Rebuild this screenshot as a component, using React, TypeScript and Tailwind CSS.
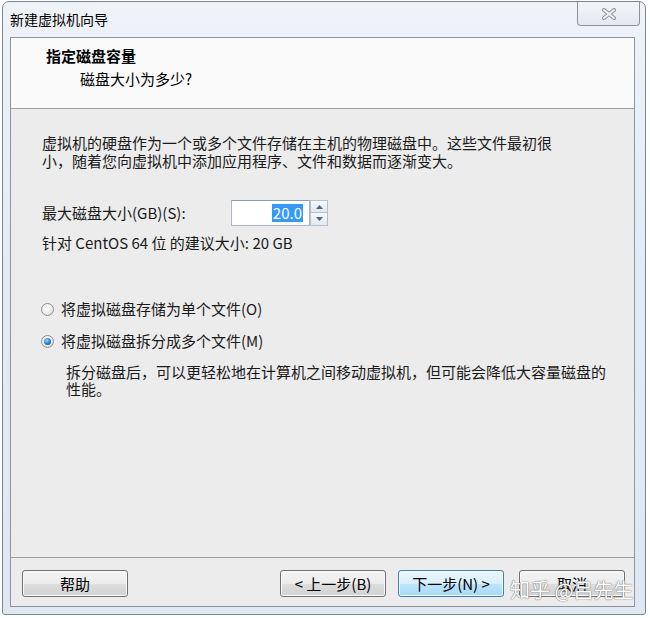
import React from 'react';

const F = "font-['Noto_Sans_CJK_SC','Microsoft_YaHei',sans-serif]";

function Radio({ checked }: { checked: boolean }) {
  return (
    <span className="w-[13px] h-[13px] rounded-full border border-[#8e8f8f] bg-[radial-gradient(circle_at_40%_35%,#ffffff_0%,#ececec_55%,#cdcdcd_100%)] flex items-center justify-center shrink-0">
      {checked && (
        <span className="w-[7px] h-[7px] rounded-full bg-[radial-gradient(circle_at_40%_35%,#9bd6fb_0%,#2a84cc_50%,#0b4f8a_100%)]" />
      )}
    </span>
  );
}

function WinButton({ children, def }: { children: React.ReactNode; def?: boolean }) {
  return (
    <div
      className={
        def
          ? 'w-[106px] h-[27px] rounded-[3px] border border-[#3c7fb1] bg-[linear-gradient(#eaf6fd_0%,#d9f0fc_50%,#bee6fd_50%,#a7d9f5_100%)] shadow-[inset_0_0_0_1px_#f4fbff] flex items-center justify-center text-[15px] leading-[18px] text-black'
          : 'w-[106px] h-[27px] rounded-[3px] border border-[#707070] bg-[linear-gradient(#f4f4f4_0%,#ececec_50%,#dedede_50%,#d2d2d2_100%)] shadow-[inset_0_0_0_1px_#fbfbfb] flex items-center justify-center text-[15px] leading-[18px] text-black'
      }
    >
      {children}
    </div>
  );
}

export default function App() {
  return (
    <div className={`relative w-[650px] h-[618px] bg-white overflow-hidden ${F}`}>
      <div className="pt-[1px] pl-[2px]">
        <div className="w-[644px] h-[614px] rounded-t-[7px] rounded-b-[3px] border border-[#7b8694] bg-[linear-gradient(180deg,#eef3f8_0%,#e3ebf4_40%,#dfe8f2_100%)] flex flex-col">
          {/* title bar */}
          <div className="h-[35px] flex items-start justify-between">
            <div className="pl-[7px] pt-[8px] text-[14px] leading-[18px] text-black">新建虚拟机向导</div>
            <div className="mr-[5px] w-[63px] h-[24px] rounded-b-[4px] border border-t-0 border-[#8a939e] bg-[linear-gradient(#f3f5f8_0%,#e4e9ef_100%)] flex items-center justify-center">
              <svg width="16" height="12" viewBox="0 0 16 12">
                <path d="M3 2 L13 10 M13 2 L3 10" stroke="#8d939a" strokeWidth="4" strokeLinecap="round" />
                <path d="M3 2 L13 10 M13 2 L3 10" stroke="#f4f5f6" strokeWidth="2" strokeLinecap="round" />
              </svg>
            </div>
          </div>
          {/* inner panel */}
          <div className="ml-[7px] mr-[10px] h-[570px] border border-[#8f959c] flex flex-col bg-[#ececec]">
            <div className="h-[71px] bg-[#fafafa] border-b border-[#a0a0a0] pl-[35px] pt-[8px]">
              <div className="text-[15px] leading-[20px] font-bold text-black">指定磁盘容量</div>
              <div className="mt-[3px] pl-[34px] text-[15px] leading-[20px] text-black">磁盘大小为多少?</div>
            </div>
            <div className="h-[448px] pl-[31px] pt-[25px] text-[15px] text-[#1a1a1a]">
              <div className="leading-[18px] whitespace-nowrap">
                <div>虚拟机的硬盘作为一个或多个文件存储在主机的物理磁盘中。这些文件最初很</div>
                <div>小，随着您向虚拟机中添加应用程序、文件和数据而逐渐变大。</div>
              </div>
              <div className="mt-[30px] flex items-center h-[26px]">
                <div className="w-[189px] leading-[18px]">最大磁盘大小(GB)(S):</div>
                <div className="w-[79px] h-[26px] border border-[#abb7c6] border-t-[#8e9cb0] bg-white flex items-center justify-end pr-[6px]">
                  <span className="bg-[#3399ff] text-white leading-[18px] px-[1px]">20.0</span>
                </div>
                <div className="w-[18px] h-[26px] flex flex-col">
                  <div className="h-[13px] border border-[#b4c0cf] bg-[linear-gradient(#f7f9fb,#e3e8ee)] flex items-center justify-center">
                    <svg width="7" height="4" viewBox="0 0 7 4"><path d="M0 4 L3.5 0 L7 4 Z" fill="#4d6185" /></svg>
                  </div>
                  <div className="h-[13px] border border-t-0 border-[#b4c0cf] bg-[linear-gradient(#f7f9fb,#e3e8ee)] flex items-center justify-center">
                    <svg width="7" height="4" viewBox="0 0 7 4"><path d="M0 0 L7 0 L3.5 4 Z" fill="#4d6185" /></svg>
                  </div>
                </div>
              </div>
              <div className="mt-[8px] leading-[18px]">针对 CentOS 64 位 的建议大小: 20 GB</div>
              <div className="mt-[47px] flex items-center gap-[7px] h-[20px] -ml-[1px]">
                <Radio checked={false} />
                <span className="leading-[20px]">将虚拟磁盘存储为单个文件(O)</span>
              </div>
              <div className="mt-[12px] flex items-center gap-[7px] h-[20px] -ml-[1px]">
                <Radio checked={true} />
                <span className="leading-[20px]">将虚拟磁盘拆分成多个文件(M)</span>
              </div>
              <div className="mt-[12px] pl-[24px] leading-[17px] whitespace-nowrap">
                <div>拆分磁盘后，可以更轻松地在计算机之间移动虚拟机，但可能会降低大容量磁盘的</div>
                <div>性能。</div>
              </div>
            </div>
            <div className="h-[1px] bg-[#a0a0a0]" />
            <div className="flex-1 flex items-start pt-[12px] pl-[11px] pr-[9px]">
              <WinButton>帮助</WinButton>
              <div className="flex-1" />
              <WinButton>&lt; 上一步(B)</WinButton>
              <div className="w-[12px]" />
              <WinButton def>下一步(N) &gt;</WinButton>
              <div className="w-[15px]" />
              <WinButton>取消</WinButton>
            </div>
          </div>
        </div>
      </div>
      {/* watermark */}
      <div className="absolute left-[510px] top-[577px] text-[20px] leading-[26px] text-white whitespace-nowrap [text-shadow:0_0_1px_#6b6b6b,0_0_1px_#6b6b6b]">
        知乎 @吕先生
      </div>
    </div>
  );
}
